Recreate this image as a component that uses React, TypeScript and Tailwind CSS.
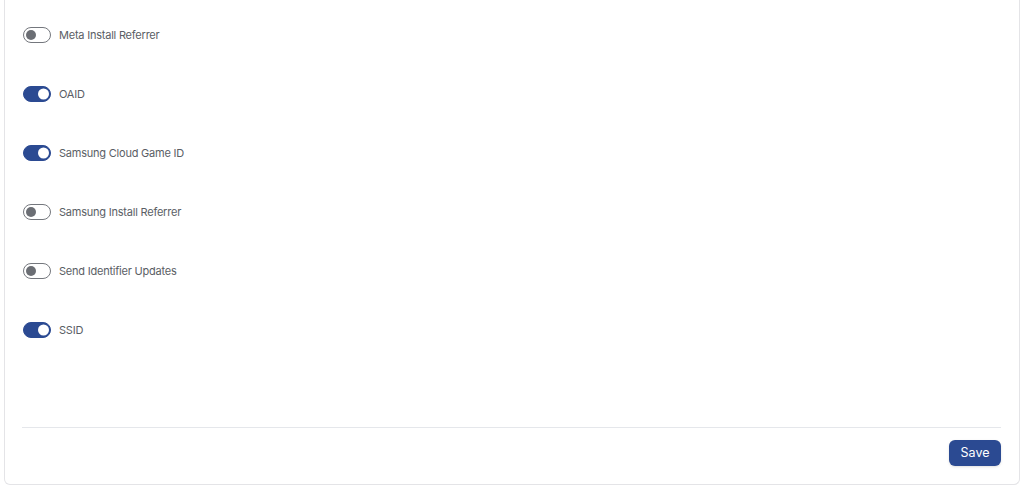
import { useState } from "react";

const initial = [
  { name: "Meta Install Referrer", on: false },
  { name: "OAID", on: true },
  { name: "Samsung Cloud Game ID", on: true },
  { name: "Samsung Install Referrer", on: false },
  { name: "Send Identifier Updates", on: false },
  { name: "SSID", on: true },
];

function Toggle({ on, onClick }: { on: boolean; onClick: () => void }) {
  return (
    <button
      type="button"
      onClick={onClick}
      className={
        on
          ? "relative w-[28px] h-[16px] rounded-full bg-[#2b4a92] border-[1.5px] border-[#2b4a92] shrink-0"
          : "relative w-[28px] h-[16px] rounded-full bg-white border-[1.5px] border-[#74777d] shrink-0"
      }
    >
      <span
        className={
          on
            ? "absolute top-1/2 -translate-y-1/2 right-[1px] w-[11px] h-[11px] rounded-full bg-white"
            : "absolute top-1/2 -translate-y-1/2 left-[1.5px] w-[10px] h-[10px] rounded-full bg-[#6b6e74]"
        }
      />
    </button>
  );
}

export default function App() {
  const [items, setItems] = useState(initial);

  return (
    <div className="h-[490px] bg-white px-[4px] pb-[5px] font-['Inter',sans-serif]">
      <div className="h-full flex flex-col border border-t-0 border-[#e4e4e7] rounded-b-[6px] pl-[17px] pr-[18px] pb-[18px]">
        <div className="flex flex-col gap-[43px] pt-[27px] pl-[1px]">
          {items.map((it, i) => (
            <div key={it.name} className="flex items-center h-[16px] gap-[8px]">
              <Toggle
                on={it.on}
                onClick={() =>
                  setItems((prev) => prev.map((p, j) => (j === i ? { ...p, on: !p.on } : p)))
                }
              />
              <span className="text-[11px] tracking-[-0.02em] text-[#5a5e65]">{it.name}</span>
            </div>
          ))}
        </div>

        <div className="mt-auto border-t border-[#e5e7eb]" />
        <div className="flex justify-end pt-[12px]">
          <button className="h-[26px] w-[52px] rounded-[6px] bg-[#2b4a92] text-white text-[12.5px] shadow-sm">
            Save
          </button>
        </div>
      </div>
    </div>
  );
}
